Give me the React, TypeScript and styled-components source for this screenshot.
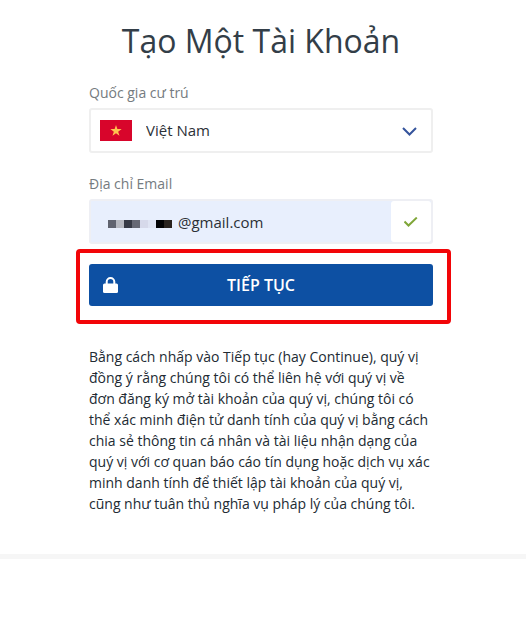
import React, { useState } from "react";
import styled, { createGlobalStyle } from "styled-components";

const GlobalStyle = createGlobalStyle`
  *, *::before, *::after { box-sizing: border-box; }
  body {
    margin: 0;
    background: #ffffff;
    color: #222b33;
    font-family: "Open Sans", "Noto Sans", sans-serif;
    font-size: 14px;
    line-height: 21px;
  }
`;

const Page = styled.main`
  padding: 20px 4px 40px 0;
`;

const Column = styled.form`
  width: 100%;
  max-width: 344px;
  margin: 0 auto;
`;

const Title = styled.h1`
  margin: 0 0 20px;
  font-size: 32px;
  line-height: 42px;
  font-weight: 400;
  text-align: center;
  color: #333e48;
  white-space: nowrap;
`;

const Field = styled.div`
  display: flex;
  flex-direction: column;
  gap: 5px;
  margin-bottom: 20px;
`;

const Label = styled.label`
  color: #757b80;
`;

const Control = styled.div<{ $filled?: boolean }>`
  display: flex;
  align-items: center;
  height: 45px;
  border: 2px solid ${(p) => (p.$filled ? "#eeeff4" : "#efefef")};
  border-radius: 3px;
  background: ${(p) => (p.$filled ? "#e8effd" : "#ffffff")};
`;

const Flag = styled.svg`
  flex: none;
  width: 32px;
  height: 21px;
  margin-left: 9px;
`;

const CountrySelect = styled.select`
  flex: 1;
  min-width: 0;
  height: 100%;
  margin-left: 14px;
  padding: 0;
  border: 0;
  outline: 0;
  appearance: none;
  background: transparent;
  color: #2b3036;
  font: inherit;
  font-size: 15px;
`;

const Chevron = styled.svg`
  flex: none;
  width: 16px;
  height: 10px;
  margin-right: 13px;
  pointer-events: none;
`;

const Mosaic = styled.svg`
  flex: none;
  width: 64px;
  height: 8px;
  margin: 4px 0 0 17px;
`;

const EmailInput = styled.input`
  flex: 1;
  min-width: 0;
  height: 100%;
  padding: 0 0 0 6px;
  border: 0;
  outline: 0;
  background: transparent;
  color: #2b3036;
  font: inherit;
  font-size: 15px;
`;

const ValidMark = styled.span`
  display: flex;
  flex: none;
  align-items: center;
  justify-content: center;
  align-self: stretch;
  width: 40px;
  border-radius: 3px;
  background: #ffffff;
`;

const Highlight = styled.div`
  margin: -15px -18px 22px -13px;
  padding: 11px 14px 14px 9px;
  border: 4px solid #f20508;
  border-radius: 4px;
`;

const SubmitButton = styled.button`
  display: grid;
  grid-template-columns: 16px 1fr 16px;
  align-items: center;
  width: 100%;
  height: 42px;
  padding: 0 14px;
  border: 0;
  border-radius: 3px;
  background: #0d50a3;
  color: #ffffff;
  font: inherit;
  font-size: 16px;
  font-weight: 600;
  cursor: pointer;
`;

const Consent = styled.p`
  margin: 0;
`;

const Divider = styled.hr`
  height: 5px;
  margin: 0;
  border: 0;
  background: #f6f6f6;
`;

const MOSAIC_COLOURS = [
  "#60636f", "#b6b8c0", "#363a45", "#666975",
  "#d6d9ea", "#dfe4f3", "#020204", "#29231f",
];

export default function App() {
  const [country, setCountry] = useState("vn");
  const [email, setEmail] = useState("@gmail.com");

  return (
    <>
      <GlobalStyle />
      <Page>
        <Column onSubmit={(e) => e.preventDefault()}>
          <Title>Tạo Một Tài Khoản</Title>

          <Field>
            <Label htmlFor="country">Quốc gia cư trú</Label>
            <Control>
              <Flag viewBox="0 0 32 21" aria-hidden="true">
                <rect width="32" height="21" fill="#d8052b" />
                <path
                  d="M16 5l1.35 4.1h4.3l-3.5 2.55 1.35 4.1-3.5-2.5-3.5 2.5 1.35-4.1-3.5-2.55h4.3z"
                  fill="#ffc450"
                />
              </Flag>
              <CountrySelect
                id="country"
                value={country}
                onChange={(e) => setCountry(e.target.value)}
              >
                <option value="vn">Việt Nam</option>
              </CountrySelect>
              <Chevron viewBox="0 0 16 10" aria-hidden="true">
                <path d="M1 2l6.5 6.5L14 2" fill="none" stroke="#35549c" strokeWidth="2" />
              </Chevron>
            </Control>
          </Field>

          <Field>
            <Label htmlFor="email">Địa chỉ Email</Label>
            <Control $filled>
              <Mosaic viewBox="0 0 64 8" shapeRendering="crispEdges" aria-hidden="true">
                {MOSAIC_COLOURS.map((colour, i) => (
                  <rect key={colour} x={i * 8} width="8" height="8" fill={colour} />
                ))}
              </Mosaic>
              <EmailInput
                id="email"
                type="text"
                value={email}
                onChange={(e) => setEmail(e.target.value)}
              />
              <ValidMark>
                <svg width="14" height="10" viewBox="0 0 14 10" aria-hidden="true">
                  <path d="M0.5 4.5l4 4L12.8 0.6" fill="none" stroke="#7fa638" strokeWidth="2" />
                </svg>
              </ValidMark>
            </Control>
          </Field>

          <Highlight>
            <SubmitButton type="submit">
              <svg width="16" height="16" viewBox="0 0 16 16" aria-hidden="true">
                <rect x="0" y="6.5" width="15" height="9.5" rx="1.5" fill="#ffffff" />
                <path
                  d="M3.7 7.5V4.8a3.8 3.8 0 0 1 7.6 0v2.7"
                  fill="none"
                  stroke="#ffffff"
                  strokeWidth="2"
                />
              </svg>
              <span>TIẾP TỤC</span>
            </SubmitButton>
          </Highlight>

          <Consent>
            Bằng cách nhấp vào Tiếp tục (hay Continue), quý vị đồng ý rằng chúng tôi có thể liên hệ
            với quý vị về đơn đăng ký mở tài khoản của quý vị, chúng tôi có thể xác minh điện tử
            danh tính của quý vị bằng cách chia sẻ thông tin cá nhân và tài liệu nhận dạng của quý
            vị với cơ quan báo cáo tín dụng hoặc dịch vụ xác minh danh tính để thiết lập tài khoản
            của quý vị, cũng như tuân thủ nghĩa vụ pháp lý của chúng tôi.
          </Consent>
        </Column>
      </Page>
      <Divider />
    </>
  );
}
